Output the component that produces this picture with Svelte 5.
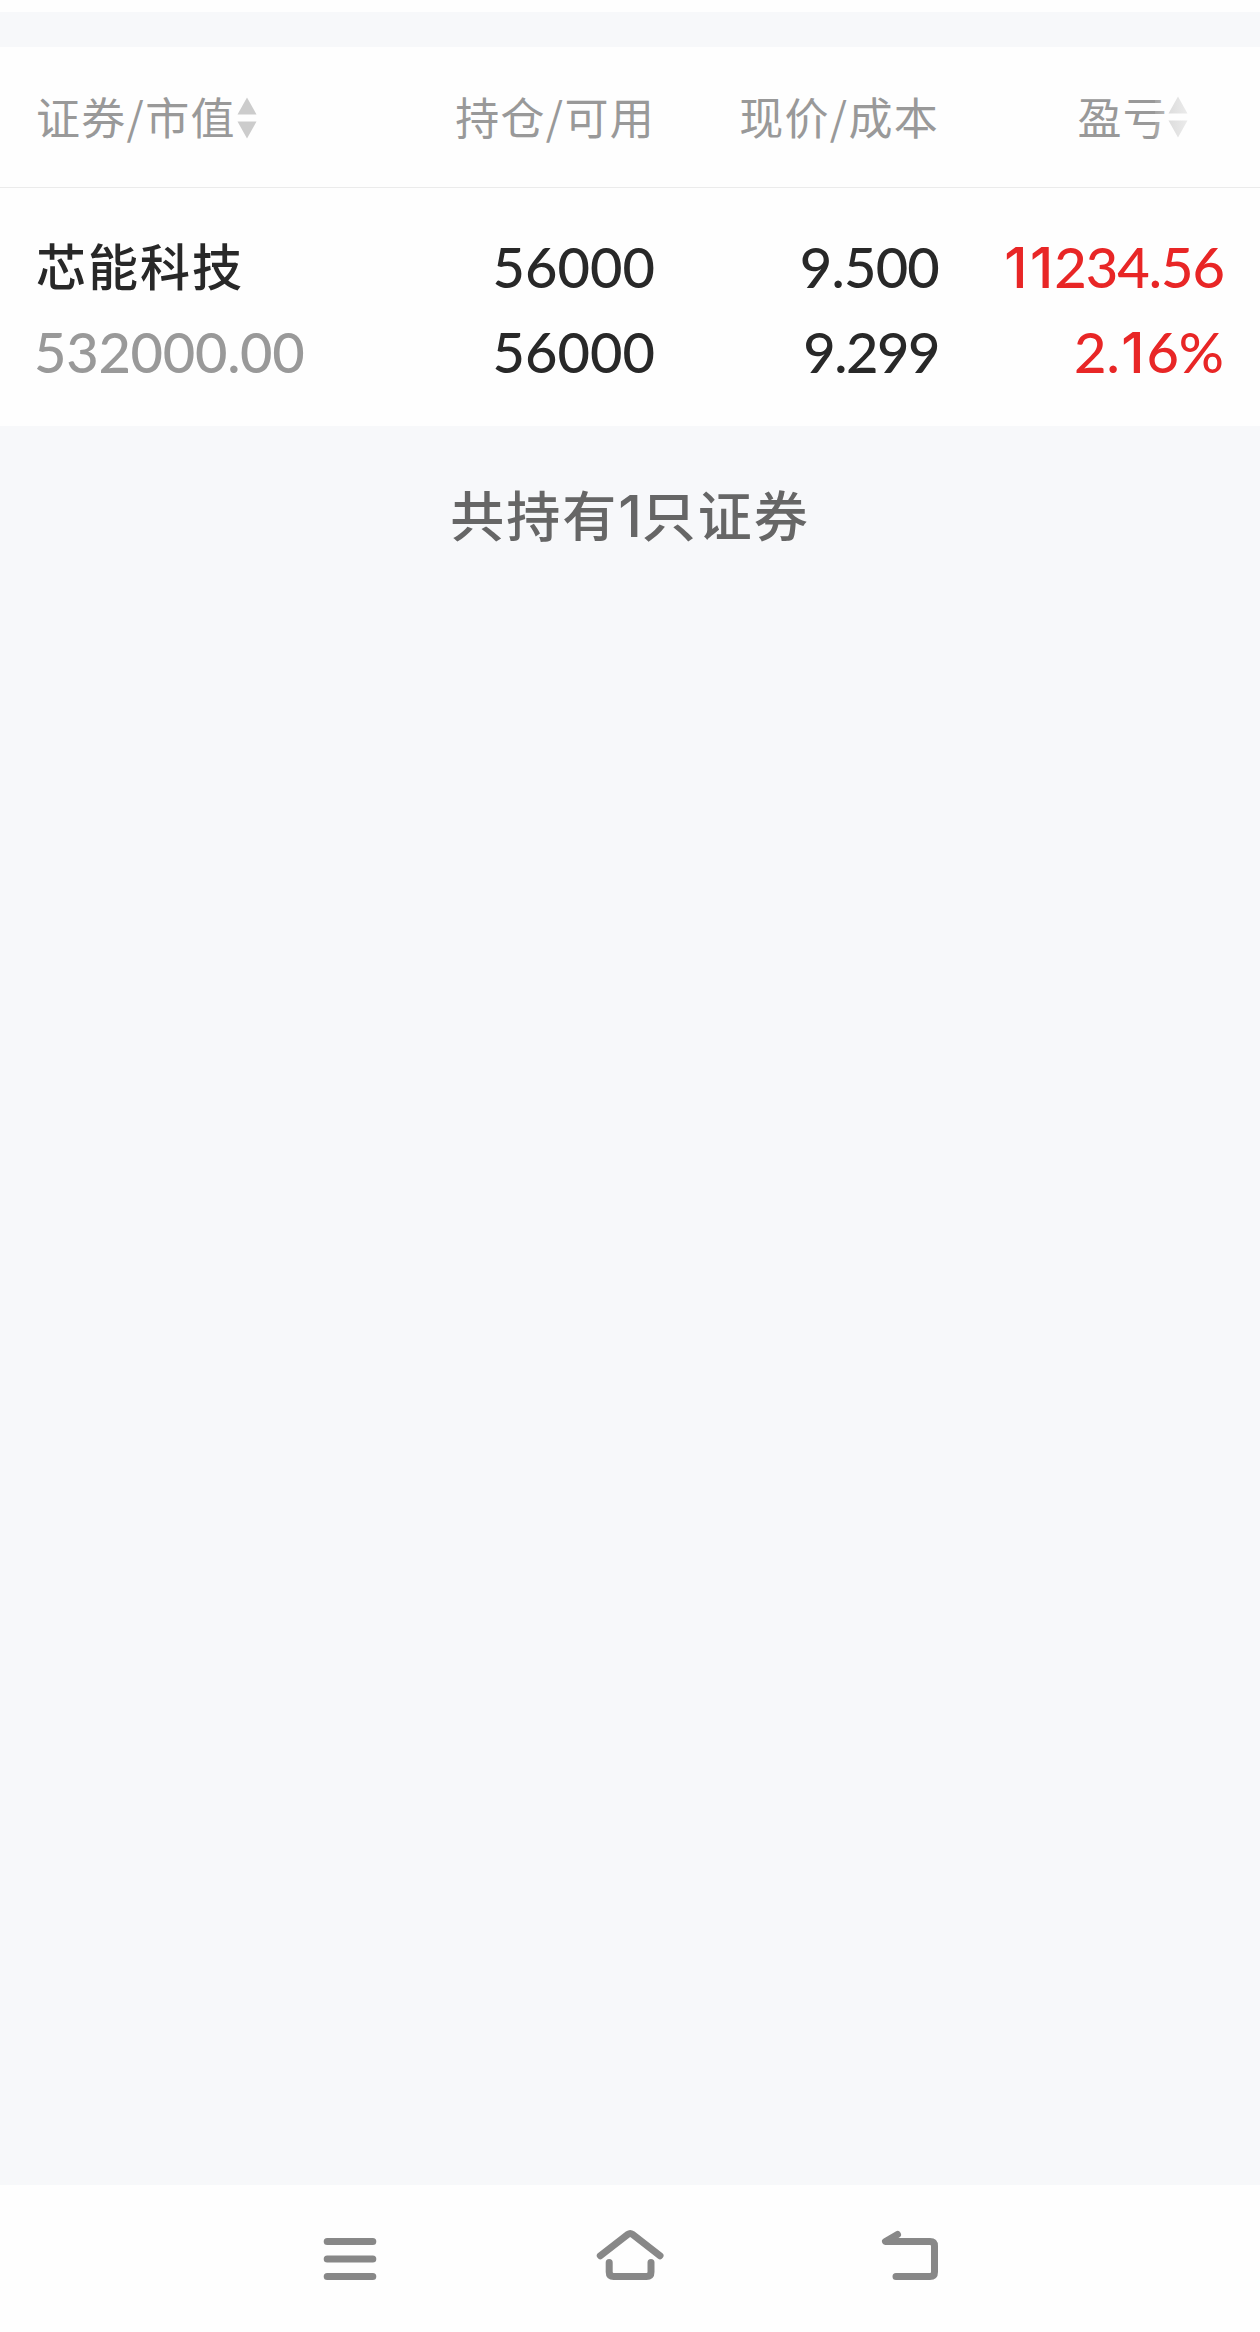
<script>
    const columns = [
        { label: '证券/市值', sortable: true },
        { label: '持仓/可用' },
        { label: '现价/成本' },
        { label: '盈亏', sortable: true, faded: true },
    ];

    let holdings = [
        {
            name: '芯能科技',
            marketValue: '532000.00',
            position: '56000',
            available: '56000',
            price: '9.500',
            cost: '9.299',
            profit: '11234.56',
            profitRate: '2.16%',
        },
    ];
</script>

<!-- Lato's 1 has a foot, so ones are set apart and drawn in Inter -->
{#snippet digits(value)}{#each value as char}{#if char === '1'}<span class="one">1</span>{:else}{char}{/if}{/each}{/snippet}

<div class="holdings-page">
    <div class="top-edge"></div>

    <section class="holdings-table">
        <header class="table-row table-header">
            {#each columns as column}
                <div class="header-cell" class:faded={column.faded}>
                    <span class="header-label">{column.label}</span>
                    {#if column.sortable}
                        <svg class="sort-icon" width="20" height="42" viewBox="0 0 20 42">
                            <path d="M10 .5 19.5 17.5H.5Z M.5 24.5H19.5L10 41.5Z" />
                        </svg>
                    {/if}
                </div>
            {/each}
        </header>

        {#each holdings as item}
            <div class="table-row holding">
                <div class="cell">
                    <span class="name">{item.name}</span>
                    <span class="muted">{@render digits(item.marketValue)}</span>
                </div>
                <div class="cell">
                    <span>{@render digits(item.position)}</span>
                    <span>{@render digits(item.available)}</span>
                </div>
                <div class="cell">
                    <span class="price">{@render digits(item.price)}</span>
                    <span class="cost">{@render digits(item.cost)}</span>
                </div>
                <div class="cell profit">
                    <span>{@render digits(item.profit)}</span>
                    <span class="rate">{@render digits(item.profitRate)}</span>
                </div>
            </div>
        {/each}
    </section>

    <p class="summary">共持有<span class="one">{holdings.length}</span>只证券</p>

    <nav class="system-bar">
        <button title="菜单">
            <svg width="72" height="72" viewBox="0 0 72 72">
                <path d="M13.2 19.5H58.8M13.2 37H58.8M13.2 54.5H58.8" />
            </svg>
        </button>
        <button title="主页">
            <svg width="72" height="72" viewBox="0 0 72 72">
                <path d="M6.3 33.7 34 12.3Q36.2 10.7 38.4 12.3L66 33.7" />
                <path d="M15.2 40.5V50Q15.2 54.5 19.7 54.5H52.5Q57 54.5 57 50V40.5" />
            </svg>
        </button>
        <button title="返回">
            <svg width="72" height="72" viewBox="0 0 72 72">
                <path d="M23.5 12.5 11.5 19.5H56Q60.5 19.5 60.5 24V50Q60.5 54.5 56 54.5H22" />
            </svg>
        </button>
    </nav>
</div>

<style>
    :global(body) {
        margin: 0;
        background: #f7f8fa;
    }

    .holdings-page {
        display: flex;
        flex-direction: column;
        height: 2332px;
        background: #f7f8fa;
        color: #282828;
        font-family: Lato, "Noto Sans CJK SC", sans-serif;
    }

    .top-edge {
        height: 12px;
        margin-bottom: 35px;
        background: #fefefe;
    }

    .holdings-table {
        background: #fefefe;
    }

    .table-row {
        display: grid;
        grid-template-columns: 1fr 284px 284px 285px;
        box-sizing: border-box;
        padding: 0 36px;
    }

    .table-header {
        height: 141px;
        border-bottom: 1px solid #ebebeb;
    }

    .header-cell {
        display: flex;
        align-items: center;
        justify-content: flex-end;
        color: #999;
        font-family: "Noto Sans CJK SC", sans-serif;
        font-size: 44px;
        letter-spacing: 1.3px;
        white-space: nowrap;
    }
    .header-cell:first-child {
        justify-content: flex-start;
    }
    .header-cell:last-child {
        padding-right: 36px;
    }

    .header-label {
        padding-bottom: 3px;
    }

    .sort-icon {
        fill: #ccc;
    }
    .header-cell:first-child .sort-icon {
        margin: 2px 0 0 1px;
    }

    .faded {
        position: relative;
    }
    .faded::after {
        content: "";
        position: absolute;
        top: 0;
        right: 0;
        width: 69px;
        height: 100%;
        background: linear-gradient(
            to right,
            rgba(254, 254, 254, 0.12),
            rgba(254, 254, 254, 0.65) 50%,
            rgba(254, 254, 254, 1)
        );
    }

    .holding {
        height: 238px;
        padding-top: 36px;
    }

    .cell {
        display: flex;
        flex-direction: column;
        align-items: flex-end;
        font-size: 56px;
        font-weight: 500;
        line-height: 85px;
    }
    .cell:first-child {
        align-items: flex-start;
    }

    .one {
        font-family: Inter, sans-serif;
        line-height: 1;
    }
    .cell .one {
        margin: 0 2px 0 1.5px;
    }

    .name {
        height: 85px;
        line-height: 80px;
        font-family: "Noto Sans CJK SC", sans-serif;
        font-size: 50px;
        letter-spacing: 2px;
    }

    .muted {
        margin-left: -2px;
        color: #999;
        letter-spacing: -0.3px;
    }

    .price {
        letter-spacing: -0.8px;
    }

    .cost {
        letter-spacing: -1.5px;
    }

    .profit {
        color: #e82626;
        letter-spacing: -1px;
    }

    .rate {
        letter-spacing: 0;
    }

    .summary {
        margin: 46px 0 0;
        text-align: center;
        color: #666;
        font-family: "Noto Sans CJK SC", sans-serif;
        font-size: 54px;
        font-weight: 500;
        line-height: 84px;
        letter-spacing: 2px;
    }
    .summary .one {
        font-size: 57px;
        letter-spacing: 0;
    }

    .system-bar {
        display: flex;
        justify-content: center;
        gap: 208px;
        box-sizing: border-box;
        height: 147px;
        margin-top: auto;
        padding-top: 37px;
        background: #fefefe;
    }
    .system-bar button {
        display: block;
        height: 72px;
        padding: 0;
        border: none;
        background: none;
    }
    .system-bar svg {
        display: block;
        fill: none;
        stroke: #888;
        stroke-width: 7;
        stroke-linecap: round;
        stroke-linejoin: round;
    }
</style>
